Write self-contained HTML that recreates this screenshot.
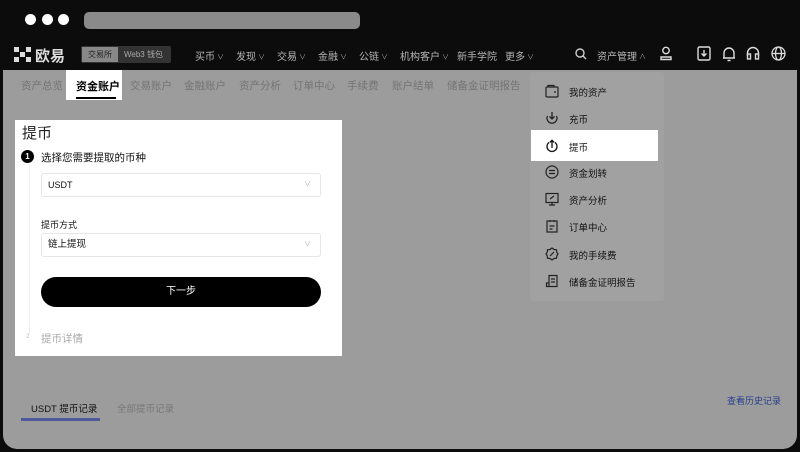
<!DOCTYPE html>
<html><head><meta charset="utf-8"><style>
*{margin:0;padding:0;box-sizing:border-box}
body{width:800px;height:452px;background:#0c0c0d;font-family:"Liberation Sans","Noto Sans CJK SC",sans-serif;position:relative;overflow:hidden}
.a{position:absolute}
.dot{width:11px;height:11px;border-radius:50%;background:#fff;top:14px}
.page{left:3px;top:70px;width:794px;height:379px;background:#9c9c9c;border-radius:0 0 14px 14px}
.nav{font-size:10px;color:#b5b5b5;top:48px}
.cv{font-size:7px;color:#999;margin-left:2px;vertical-align:1px}
.sub{font-size:10.5px;color:#747474;top:78px}
.mi{left:569px;font-size:9.5px;color:#111}
.ic{left:545px;width:14px;height:14px}
</style></head><body>
<div class="a dot" style="left:25px"></div>
<div class="a dot" style="left:42px"></div>
<div class="a dot" style="left:58px"></div>
<div class="a" style="left:84px;top:12px;width:276px;height:17px;border-radius:5px;background:#8a8a8a"></div>
<svg class="a" style="left:14px;top:47px" width="18" height="16" viewBox="0 0 18 16" fill="#ddd"><rect x="0" y="0" width="5" height="5"/><rect x="12" y="0" width="5" height="5"/><rect x="6" y="5" width="5" height="5"/><rect x="0" y="10" width="5" height="5"/><rect x="12" y="10" width="5" height="5"/></svg>
<div class="a" style="left:35px;top:45px;font-size:15px;color:#ddd;font-weight:bold">欧易</div>
<div class="a" style="left:81px;top:46px;width:90px;height:17px;background:#333;border-radius:2px"></div>
<div class="a" style="left:82px;top:47px;width:36px;height:15px;background:#888;font-size:8px;color:#222;text-align:center;line-height:15px">交易所</div>
<div class="a" style="left:124px;top:47px;font-size:8px;color:#aaa;line-height:15px">Web3 钱包</div>
<div class="a nav" style="left:195px">买币<span class="cv">∨</span></div>
<div class="a nav" style="left:236px">发现<span class="cv">∨</span></div>
<div class="a nav" style="left:277px">交易<span class="cv">∨</span></div>
<div class="a nav" style="left:318px">金融<span class="cv">∨</span></div>
<div class="a nav" style="left:359px">公链<span class="cv">∨</span></div>
<div class="a nav" style="left:400px">机构客户<span class="cv">∨</span></div>
<div class="a nav" style="left:457px">新手学院</div>
<div class="a nav" style="left:505px">更多<span class="cv">∨</span></div>
<svg class="a" style="left:575px;top:48px" width="12" height="12" viewBox="0 0 12 12" fill="none" stroke="#ccc" stroke-width="1.4"><circle cx="5" cy="5" r="4"/><path d="M8 8l3 3"/></svg>
<div class="a nav" style="left:597px">资产管理<span class="cv">∧</span></div>
<svg class="a" style="left:659px;top:46px" width="14" height="15" viewBox="0 0 14 15" fill="none" stroke="#ddd" stroke-width="1.4"><circle cx="7" cy="4.5" r="3.2"/><path d="M2 13.5v-2.5h10v2.5z"/></svg>
<svg class="a" style="left:697px;top:46px" width="14" height="15" viewBox="0 0 14 15" fill="none" stroke="#ddd" stroke-width="1.4"><rect x="1" y="1" width="12" height="13" rx="1.5"/><path d="M7 4v6M4.5 7.5L7 10l2.5-2.5"/></svg>
<svg class="a" style="left:722px;top:46px" width="14" height="16" viewBox="0 0 14 16" fill="none" stroke="#ddd" stroke-width="1.4"><path d="M2 12V7a5 5 0 0110 0v5zM1 12h12M5.5 14.5h3"/></svg>
<svg class="a" style="left:746px;top:46px" width="14" height="15" viewBox="0 0 14 15" fill="none" stroke="#ddd" stroke-width="1.4"><path d="M1.5 10V7a5.5 5.5 0 0111 0v3"/><rect x="1.5" y="8" width="3" height="5"/><rect x="9.5" y="8" width="3" height="5"/></svg>
<svg class="a" style="left:771px;top:46px" width="15" height="15" viewBox="0 0 15 15" fill="none" stroke="#ddd" stroke-width="1.3"><circle cx="7.5" cy="7.5" r="6.5"/><ellipse cx="7.5" cy="7.5" rx="3" ry="6.5"/><path d="M1 7.5h13"/></svg>

<div class="a page"></div>
<div class="a sub" style="left:21px">资产总览</div>
<div class="a" style="left:66px;top:70px;width:56px;height:30px;background:#fff"></div>
<div class="a" style="left:76px;top:78px;font-size:11px;color:#000;font-weight:bold">资金账户</div>
<div class="a" style="left:76px;top:97px;width:40px;height:2px;background:#000"></div>
<div class="a sub" style="left:130px">交易账户</div>
<div class="a sub" style="left:184px">金融账户</div>
<div class="a sub" style="left:239px">资产分析</div>
<div class="a sub" style="left:293px">订单中心</div>
<div class="a sub" style="left:347px">手续费</div>
<div class="a sub" style="left:392px">账户结单</div>
<div class="a sub" style="left:447px">储备金证明报告</div>

<div class="a" style="left:15px;top:120px;width:327px;height:236px;background:#fff"></div>
<div class="a" style="left:22px;top:122px;font-size:15px;color:#222">提币</div>
<div class="a" style="left:29px;top:164px;width:1px;height:170px;background:#eee"></div>
<div class="a" style="left:21px;top:150px;width:13px;height:13px;border-radius:50%;background:#000;color:#fff;font-size:8px;text-align:center;line-height:13px;font-weight:bold">1</div>
<div class="a" style="left:41px;top:150px;font-size:10.5px;color:#111">选择您需要提取的币种</div>
<div class="a" style="left:41px;top:173px;width:280px;height:24px;border:1px solid #e6e6e6;border-radius:3px;font-size:9px;color:#111;line-height:22px;padding-left:6px">USDT<span style="position:absolute;right:9px;color:#aaa;font-size:7px">∨</span></div>
<div class="a" style="left:41px;top:218px;font-size:9px;color:#111">提币方式</div>
<div class="a" style="left:41px;top:233px;width:280px;height:24px;border:1px solid #e6e6e6;border-radius:3px;font-size:9.5px;color:#111;line-height:22px;padding-left:6px">链上提现<span style="position:absolute;right:9px;color:#aaa;font-size:7px">∨</span></div>
<div class="a" style="left:41px;top:277px;width:280px;height:30px;background:#000;border-radius:15px;color:#fff;font-size:10px;text-align:center;line-height:30px">下一步</div>
<div class="a" style="left:26px;top:334px;font-size:6px;color:#bbb">2</div>
<div class="a" style="left:41px;top:331px;font-size:10.5px;color:#aaa">提币详情</div>

<div class="a" style="left:530px;top:72px;width:134px;height:229px;background:#a1a1a1;border-radius:3px"></div>
<div class="a" style="left:531px;top:130px;width:127px;height:31px;background:#fff"></div>
<svg class="a ic" style="top:84px" viewBox="0 0 14 14" fill="none" stroke="#222" stroke-width="1.2"><rect x="1" y="3" width="12" height="10" rx="1"/><path d="M3 3V1.5h6V3M9 8h2"/></svg>
<div class="a mi" style="top:85px">我的资产</div>
<svg class="a ic" style="top:111px" viewBox="0 0 14 14" fill="none" stroke="#222" stroke-width="1.3"><path d="M2.5 5a5 5 0 109 0M7 1v7M4.5 5.5L7 8l2.5-2.5"/></svg>
<div class="a mi" style="top:112px">充币</div>
<svg class="a ic" style="top:139px" viewBox="0 0 14 14" fill="none" stroke="#111" stroke-width="1.3"><path d="M4 3.5a5 5 0 106 0M7 9V1.5M4.8 3.5L7 1.3l2.2 2.2"/></svg>
<div class="a mi" style="top:140px">提币</div>
<svg class="a ic" style="top:165px" viewBox="0 0 14 14" fill="none" stroke="#222" stroke-width="1.2"><circle cx="7" cy="7" r="6"/><path d="M4 5.5h6M4 8.5h6"/></svg>
<div class="a mi" style="top:166px">资金划转</div>
<svg class="a ic" style="top:192px" viewBox="0 0 14 14" fill="none" stroke="#222" stroke-width="1.2"><rect x="1" y="1.5" width="12" height="9"/><path d="M7 10.5v2.5M4 13h6M5 7l4-3"/></svg>
<div class="a mi" style="top:193px">资产分析</div>
<svg class="a ic" style="top:219px" viewBox="0 0 14 14" fill="none" stroke="#222" stroke-width="1.2"><rect x="2" y="2" width="10" height="11"/><path d="M5 1v2M9 1v2M4.5 7h5M4.5 10h3"/></svg>
<div class="a mi" style="top:220px">订单中心</div>
<svg class="a ic" style="top:247px" viewBox="0 0 14 14" fill="none" stroke="#222" stroke-width="1.2"><path d="M7 1l2 1.5 2.5.3.3 2.5L13 7l-1.2 1.7-.3 2.5-2.5.3L7 13l-2-1.5-2.5-.3-.3-2.5L1 7l1.2-1.7.3-2.5L5 2.5z"/><path d="M5 9l4-4"/></svg>
<div class="a mi" style="top:248px">我的手续费</div>
<svg class="a ic" style="top:274px" viewBox="0 0 14 14" fill="none" stroke="#222" stroke-width="1.2"><path d="M4 1.5h8v11H4zM4 9H1.5v3.5H4M6 5h4M6 8h4"/></svg>
<div class="a mi" style="top:275px">储备金证明报告</div>

<div class="a" style="left:31px;top:401px;font-size:9.5px;color:#111">USDT 提币记录</div>
<div class="a" style="left:21px;top:418px;width:79px;height:3px;background:#4c5a9c"></div>
<div class="a" style="left:117px;top:401px;font-size:9.5px;color:#777">全部提币记录</div>
<div class="a" style="left:727px;top:394px;font-size:9px;color:#27408b">查看历史记录</div>
</body></html>
